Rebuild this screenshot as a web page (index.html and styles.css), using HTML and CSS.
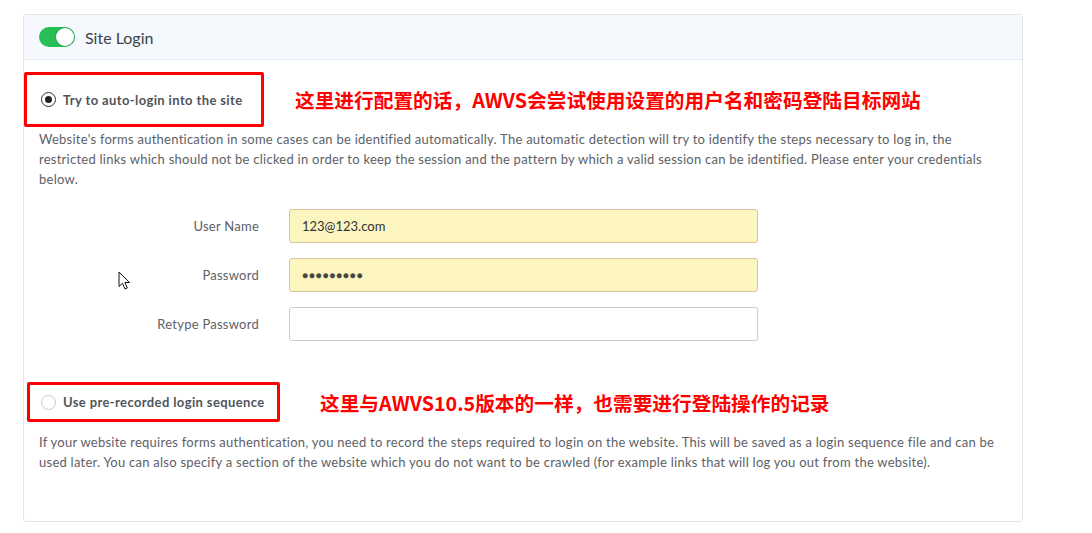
FILE: index.html
```html
<!DOCTYPE html>
<html>
<head>
<meta charset="utf-8">
<link rel="stylesheet" href="styles.css">
</head>
<body>
<div class="card">
  <div class="card-header">
    <span class="toggle"><span class="knob"></span></span>
    <span class="title">Site Login</span>
  </div>
  <div class="card-body">
    <div class="opt-row opt-row-1">
      <div class="redbox box1">
        <span class="radio checked"></span>
        <span class="opt-label">Try to auto-login into the site</span>
      </div>
      <span class="note note1">这里进行配置的话，AWVS会尝试使用设置的用户名和密码登陆目标网站</span>
    </div>
    <p class="desc desc1">Website's forms authentication in some cases can be identified automatically. The automatic detection will try to identify the steps necessary to log in, the<br>restricted links which should not be clicked in order to keep the session and the pattern by which a valid session can be identified. Please enter your credentials<br>below.</p>
    <div class="form">
      <div class="form-row">
        <label class="flabel">User Name</label>
        <div class="input filled">123@123.com</div>
      </div>
      <div class="form-row">
        <label class="flabel">Password</label>
        <div class="input filled dots">●●●●●●●●●</div>
      </div>
      <div class="form-row">
        <label class="flabel">Retype Password</label>
        <div class="input"></div>
      </div>
      <svg class="cursor" width="13" height="20" viewBox="0 0 13 20"><path d="M1 1 L1 15.5 L4.5 12.3 L7 18 L9.3 17 L6.9 11.5 L11.5 11.5 Z" fill="#fff" stroke="#111" stroke-width="1" stroke-linejoin="round"/></svg>
    </div>
    <div class="opt-row opt-row-2">
      <div class="redbox box2">
        <span class="radio"></span>
        <span class="opt-label">Use pre-recorded login sequence</span>
      </div>
      <span class="note note2">这里与AWVS10.5版本的一样，也需要进行登陆操作的记录</span>
    </div>
    <p class="desc desc2">If your website requires forms authentication, you need to record the steps required to login on the website. This will be saved as a login sequence file and can be<br>used later. You can also specify a section of the website which you do not want to be crawled (for example links that will log you out from the website).</p>
  </div>
</div>
</body>
</html>
```

FILE: styles.css
```css
html, body {
  margin: 0;
  padding: 0;
  background: #ffffff;
}
body {
  font-family: "Lato", "Liberation Sans", sans-serif;
  color: #5d6166;
}
.card {
  margin: 14px 0 0 23px;
  width: 1000px;
  height: 508px;
  border: 1px solid #e1e6ea;
  border-radius: 3px;
  box-sizing: border-box;
}
.card-header {
  height: 44px;
  background: #f5f9fe;
  border-bottom: 1px solid #e6ebf0;
  display: flex;
  align-items: center;
  padding-left: 15px;
}
.toggle {
  width: 36px;
  height: 20px;
  border-radius: 10px;
  background: #27bf58;
  position: relative;
  display: inline-block;
}
.knob {
  position: absolute;
  right: 1px;
  top: 1px;
  width: 18px;
  height: 18px;
  border-radius: 50%;
  background: #fff;
  box-shadow: 0 0 2px rgba(0,0,0,0.35);
}
.title {
  margin-left: 10px;
  font-size: 16px;
  color: #3d4247;
}
.card-body {
  padding: 0 16px 0 15px;
}
.opt-row {
  display: flex;
  align-items: center;
}
.opt-row-1 {
  margin-top: 12px;
  margin-left: -15px;
}
.opt-row-2 {
  margin-top: 41px;
  margin-left: -12px;
}
.redbox {
  border: 3px solid #ff0000;
  border-radius: 2px;
  display: flex;
  align-items: center;
  box-sizing: border-box;
}
.box1 {
  width: 240px;
  height: 55px;
  padding-left: 14px;
}
.box2 {
  width: 253px;
  height: 40px;
  padding-left: 11px;
}
.radio {
  width: 15px;
  height: 15px;
  border-radius: 50%;
  border: 1px solid #c9c9c9;
  box-sizing: border-box;
  position: relative;
  background: #fff;
  flex: none;
}
.radio.checked {
  border: 1.5px solid #333;
}
.radio.checked::after {
  content: "";
  position: absolute;
  left: 2.5px;
  top: 2.5px;
  width: 7px;
  height: 7px;
  border-radius: 50%;
  background: #222;
}
.opt-label {
  margin-left: 7px;
  font-size: 13px;
  font-weight: bold;
  letter-spacing: 0.38px;
  color: #50555a;
}
.note {
  font-family: "Noto Sans CJK SC", sans-serif;
  font-weight: bold;
  color: #ff0000;
  font-size: 19.7px;
}
.note1 {
  margin-left: 31px;
}
.note2 {
  margin-left: 40px;
}
.desc {
  margin: 0;
  font-size: 13px;
  line-height: 20px;
  letter-spacing: 0.25px;
  color: #5d6166;
}
.desc1 {
  margin-top: 2px;
}
.desc2 {
  margin-top: 10px;
}
.form {
  margin-top: 20px;
  display: flex;
  flex-direction: column;
  gap: 15px;
  position: relative;
}
.form-row {
  display: flex;
  align-items: center;
}
.flabel {
  width: 220px;
  text-align: right;
  font-size: 13px;
  letter-spacing: 0.25px;
  color: #5d6166;
}
.input {
  margin-left: 30px;
  width: 469px;
  height: 34px;
  box-sizing: border-box;
  border: 1px solid #cccccc;
  border-radius: 3px;
  background: #fff;
  padding-left: 12px;
  font-size: 13px;
  line-height: 32px;
  color: #333;
}
.input.filled {
  background: #fdf5c0;
  border-color: #d7c49e;
}
.input.dots {
  font-size: 10px;
  letter-spacing: 0.8px;
  color: #4a4540;
}
.cursor {
  position: absolute;
  left: 79px;
  top: 62px;
}
```
